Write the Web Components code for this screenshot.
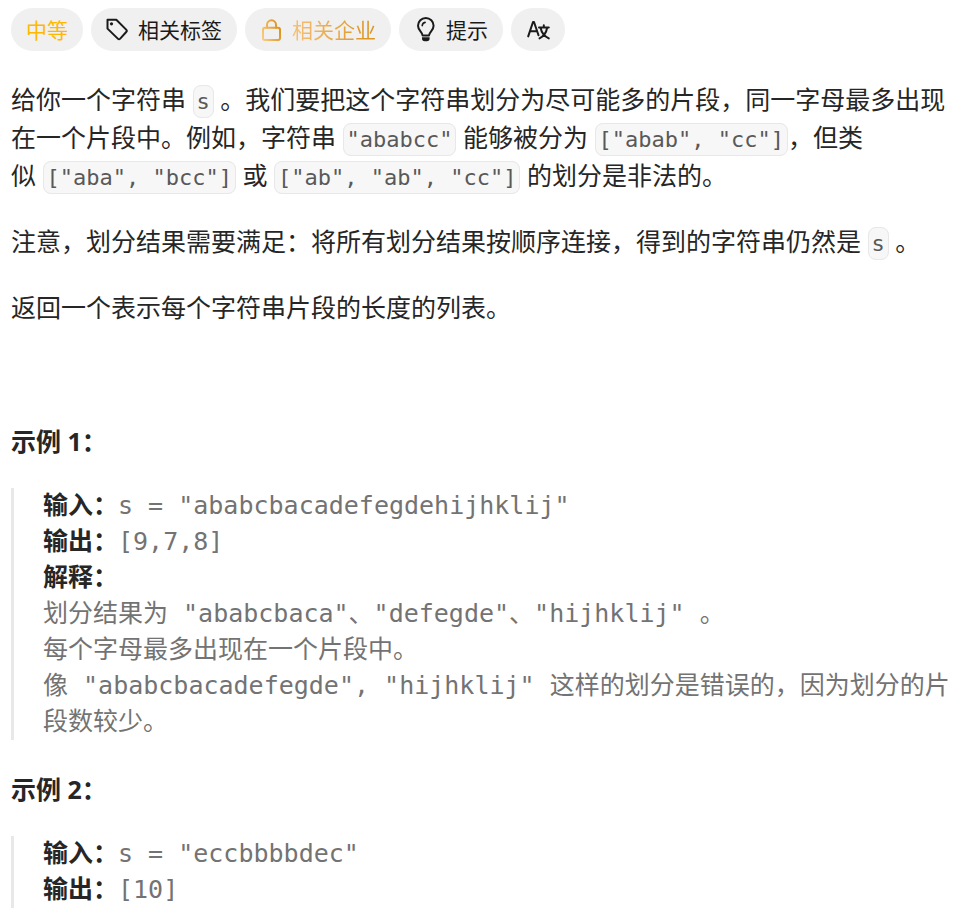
<!DOCTYPE html>
<html lang="zh-CN">
<head>
<meta charset="UTF-8">
<meta name="viewport" content="width=device-width, initial-scale=1">
<title>划分字母区间</title>
<style>
  body {
    margin: 8px 8px 8px 11px;
    background: #fff;
    color: #262626;
    font: 25px/38px "Noto Sans", "Noto Sans CJK SC", sans-serif;
  }
</style>
</head>
<body>
<problem-page>
  <tag-bar slot="tags">
    <tag-pill kind="level">中等</tag-pill>
    <tag-pill icon="tag">相关标签</tag-pill>
    <tag-pill icon="lock" kind="premium">相关企业</tag-pill>
    <tag-pill icon="bulb">提示</tag-pill>
    <tag-pill icon="translate" label="切换语言"></tag-pill>
  </tag-bar>

  <text-block>给你一个字符串&nbsp;<inline-code>s</inline-code>&nbsp;。我们要把这个字符串划分为尽可能多的片段，同一字母最多出现在一个片段中。例如，字符串&nbsp;<inline-code>"ababcc"</inline-code>&nbsp;能够被分为&nbsp;<inline-code>["abab", "cc"]</inline-code>，但类似&nbsp;<inline-code>["aba", "bcc"]</inline-code>&nbsp;或&nbsp;<inline-code>["ab", "ab", "cc"]</inline-code>&nbsp;的划分是非法的。</text-block>
  <text-block>注意，划分结果需要满足：将所有划分结果按顺序连接，得到的字符串仍然是&nbsp;<inline-code>s</inline-code>&nbsp;。</text-block>
  <text-block>返回一个表示每个字符串片段的长度的列表。</text-block>
  <text-block>&nbsp;</text-block>

  <example-block heading="示例 1：">
    <example-line label="输入：">s = "ababcbacadefegdehijhklij"</example-line>
    <example-line label="输出：">[9,7,8]</example-line>
    <example-line label="解释："></example-line>
    <example-line>划分结果为 "ababcbaca"、"defegde"、"hijhklij" 。</example-line>
    <example-line>每个字母最多出现在一个片段中。</example-line>
    <example-line>像 "ababcbacadefegde", "hijhklij" 这样的划分是错误的，因为划分的片段数较少。</example-line>
  </example-block>
  <example-block heading="示例 2：">
    <example-line label="输入：">s = "eccbbbbdec"</example-line>
    <example-line label="输出：">[10]</example-line>
  </example-block>
</problem-page>

<script>
const icons = {
  tag: /*html*/ `
    <path d="M1.500 1.700h8.800l9.900 9.900a1.700 1.700 0 0 1 0 2.400l-6 6.600a1.700 1.700 0 0 1-2.400 0L1.500 10.600z"/>
    <circle cx="5.500" cy="5.800" r="1.600" fill="currentColor" stroke="none"/>`,
  lock: /*html*/ `
    <defs>
      <linearGradient id="gold" gradientUnits="userSpaceOnUse" x1="2" y1="16" x2="20" y2="9">
        <stop offset="0" stop-color="#f9c77d"/>
        <stop offset="1" stop-color="#d9921a"/>
      </linearGradient>
    </defs>
    <g stroke="url(#gold)">
      <rect x="3" y="9.800" width="17" height="12.200" rx="2"/>
      <path d="M7 9.800V6.800a4.500 4.500 0 0 1 9 0v3"/>
    </g>`,
  bulb: /*html*/ `
    <path d="M8.600 17.500C8.300 14 4 12.300 4 7.800a7.800 7.800 0 0 1 15.600 0C19.600 12.300 15.300 14 15 17.500z"/>
    <path d="M8.200 7.600a3.800 3.800 0 0 1 2.900-3.200" stroke-width="1.600"/>
    <path d="M8 19.200h7.600v1.300a2.800 2.800 0 0 1-2.800 2.800h-2A2.800 2.800 0 0 1 8 20.500z" fill="currentColor" stroke="none"/>`,
  translate: /*html*/ `
    <path d="M2.200 18.400 7 4h1l4.500 13.200M4 13.300h6.800"/>
    <path d="M13 9.500h9.800M17.800 7.200v2.300M21.200 9.500c-.8 4.600-3.600 8.800-7.700 10.900M14.500 9.500c.9 4.600 3.900 8.800 8.300 10.900"/>`
};

class ProblemPage extends HTMLElement {
  constructor() {
    super();
    this.attachShadow({ mode: "open" }).innerHTML = /*html*/ `
    <style>
      :host {
        display: block;
      }

      main {
        display: flex;
        flex-direction: column;
        gap: 28px;
      }

      header {
        margin-bottom: 1px;
      }
    </style>
    <main>
      <header><slot name="tags"></slot></header>
      <slot></slot>
    </main>
    `;
  }
}
customElements.define("problem-page", ProblemPage);

class TagBar extends HTMLElement {
  constructor() {
    super();
    this.attachShadow({ mode: "open" }).innerHTML = /*html*/ `
    <style>
      :host {
        display: flex;
        flex-wrap: wrap;
        gap: 8px;
      }
    </style>
    <slot></slot>
    `;
  }
}
customElements.define("tag-bar", TagBar);

class TagPill extends HTMLElement {
  constructor() {
    super();
    this.attachShadow({ mode: "open" });
  }

  connectedCallback() {
    this.render();
  }

  render() {
    const icon = icons[this.getAttribute("icon")];
    const label = this.getAttribute("label");

    this.shadowRoot.innerHTML = /*html*/ `
    <style>
      :host {
        display: block;
      }

      button {
        display: flex;
        align-items: center;
        gap: 8px;
        height: 43px;
        padding: 0 15px;
        border: 0;
        border-radius: 22px;
        background: #f0f0f0;
        color: #1a1a1a;
        font: inherit;
        font-size: 21px;
        line-height: 32px;
        cursor: pointer;
      }

      svg {
        width: 24px;
        height: 24px;
        overflow: visible;
        fill: none;
        stroke: currentColor;
        stroke-width: 2;
        stroke-linecap: round;
        stroke-linejoin: round;
      }

      :host([kind="level"]) button {
        color: #ffb800;
      }

      :host([kind="premium"]) span {
        background: linear-gradient(90deg, #f7c078, #d9921a);
        -webkit-background-clip: text;
        background-clip: text;
        color: transparent;
      }
    </style>
    <button type="button" ${label ? `aria-label="${label}"` : ""}>
      ${icon ? `<svg viewBox="0 0 24 24" aria-hidden="true">${icon}</svg>` : ""}
      ${label ? "" : "<span><slot></slot></span>"}
    </button>
    `;
  }
}
customElements.define("tag-pill", TagPill);

class TextBlock extends HTMLElement {
  constructor() {
    super();
    this.attachShadow({ mode: "open" }).innerHTML = /*html*/ `
    <style>
      :host {
        display: block;
      }

      p {
        margin: 0;
      }
    </style>
    <p><slot></slot></p>
    `;
  }
}
customElements.define("text-block", TextBlock);

class InlineCode extends HTMLElement {
  constructor() {
    super();
    this.attachShadow({ mode: "open" }).innerHTML = `<style>
      :host {
        display: inline;
      }

      code {
        padding: 3px;
        border: 1px solid #e8e8e8;
        border-radius: 8px;
        background: #f7f7f7;
        color: #595959;
        font: 22px/22px "DejaVu Sans Mono", monospace;
      }
    </style><code><slot></slot></code>`;
  }
}
customElements.define("inline-code", InlineCode);

class ExampleBlock extends HTMLElement {
  constructor() {
    super();
    this.attachShadow({ mode: "open" });
  }

  connectedCallback() {
    this.shadowRoot.innerHTML = /*html*/ `
    <style>
      :host {
        display: block;
        margin-top: 2px;
      }

      p {
        margin: 0 0 28px;
      }

      pre {
        margin: 0;
        padding-left: 29px;
        border-left: 3px solid #e8e8e8;
        color: #737373;
        font: 25px/36px "DejaVu Sans Mono", "Noto Sans CJK SC", monospace;
        white-space: normal;
      }
    </style>
    <p><strong>${this.getAttribute("heading")}</strong></p>
    <pre><slot></slot></pre>
    `;
  }
}
customElements.define("example-block", ExampleBlock);

class ExampleLine extends HTMLElement {
  constructor() {
    super();
    this.attachShadow({ mode: "open" });
  }

  connectedCallback() {
    const label = this.getAttribute("label");

    this.shadowRoot.innerHTML = `<style>
      :host {
        display: block;
        white-space: pre-wrap;
      }

      strong {
        color: #262626;
      }
    </style>${label ? `<strong>${label}</strong>` : ""}<slot></slot>`;
  }
}
customElements.define("example-line", ExampleLine);
</script>
</body>
</html>
